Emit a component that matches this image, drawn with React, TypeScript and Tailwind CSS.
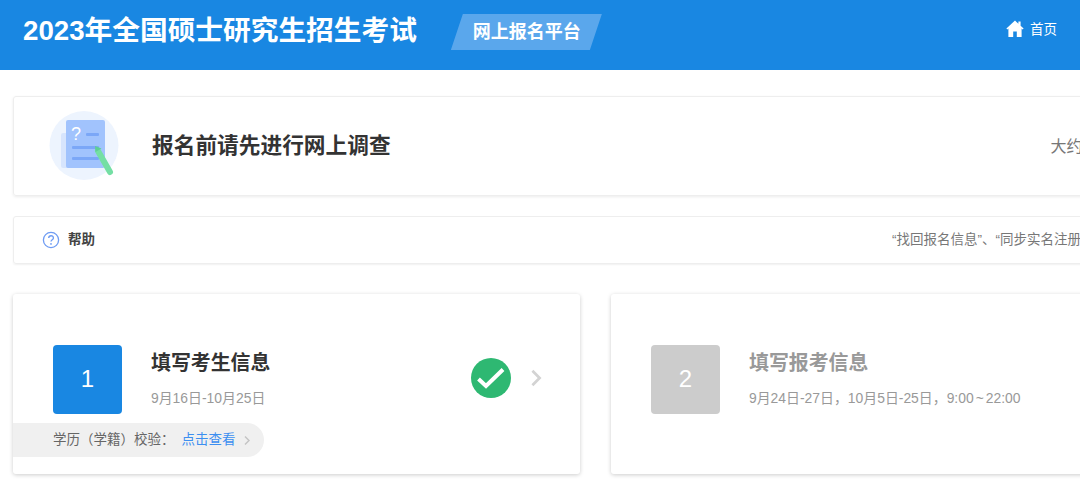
import React from "react";

const font = { fontFamily: '"Liberation Sans", "Noto Sans CJK SC", sans-serif' };

function Chevron({ className }: { className: string }) {
  return (
    <svg viewBox="0 0 12 20" className={className} fill="none" stroke="currentColor" strokeWidth="3">
      <path d="M2 2l8 8-8 8" />
    </svg>
  );
}

function Step({ n, title, date, active }: { n: string; title: string; date: React.ReactNode; active?: boolean }) {
  return (
    <div className="flex items-center gap-[29px]">
      <div className={`flex h-[69px] w-[69px] items-center justify-center rounded-[4px] pb-[1px] text-[24px] text-white ${active ? "bg-[#1987e2]" : "bg-[#cccccc]"}`}>
        {n}
      </div>
      <div className="flex flex-col pb-[4px]">
        <div className={`h-[30px] text-[19.900px] leading-[30px] font-bold ${active ? "text-[#333333]" : "text-[#999999]"}`}>{title}</div>
        <div className="mt-[10px] h-[20px] text-[13.900px] leading-[20px] text-[#999999]">{date}</div>
      </div>
    </div>
  );
}

export default function App() {
  return (
    <div className="h-[479px] w-[1080px] overflow-hidden bg-white" style={font}>
      <header className="flex h-[70px] w-[1080px] bg-[#1987e2] text-white">
        <h1 className="mt-[13px] ml-[23px] h-[36px] text-[27.700px] leading-[36px] font-bold whitespace-nowrap">2023年全国硕士研究生招生考试</h1>
        <div className="mt-[14px] ml-[34px] flex h-[36px] w-[151px] items-center justify-center bg-[#5aa7ec] text-[18px] font-bold [clip-path:polygon(12px_0,100%_0,139px_100%,0_100%)]">
          <span className="pl-[1px]">网上报名平台</span>
        </div>
        <div className="mt-[19px] mr-[23px] ml-auto flex h-[20px] items-center gap-[6px] text-[13.500px]">
          <svg viewBox="0 0 18 18" className="h-[18px] w-[18px]" fill="#fff">
            <path d="M9 .4 .4 8.600l.9 1L2.400 8.600V17h4.800v-5.400h3.600V17h4.800V8.600l1.100 1 .9-1-3-2.800V1.400h-2.200v2.400L9 .4z" />
          </svg>
          <span className="pt-[2px]">首页</span>
        </div>
      </header>

      <main className="flex w-[1400px] flex-col pt-[26px] pl-[13px]">
        <section className="flex h-[100px] w-[1380px] items-center rounded-[3px] border border-[#eeeeee] shadow-[0_1px_3px_rgba(0,0,0,0.08)]">
          <svg viewBox="0 0 90 80" className="mb-[2px] ml-[26px] h-[80px] w-[90px] shrink-0">
            <circle cx="44" cy="40.500" r="34.500" fill="#edf4fe" />
            <rect x="21" y="28" width="10" height="35" rx="2" fill="#d7e5fd" />
            <rect x="26" y="15" width="39" height="48" rx="2" fill="#a1c3fd" />
            <rect x="46" y="28" width="13" height="3" rx="1" fill="#7ba7f7" />
            <rect x="32" y="41" width="27" height="3" rx="1" fill="#7ba7f7" />
            <rect x="32" y="52" width="27" height="3" rx="1" fill="#7ba7f7" />
            <path d="M58 46 70 67" stroke="#74dfa4" strokeWidth="6" strokeLinecap="round" />
            <path d="M55 41 61.500 43.500 55.500 47z" fill="#5fcf95" />
            <text x="31" y="35" fontSize="18" fill="#fff" fontFamily="Liberation Sans">?</text>
          </svg>
          <h2 className="ml-[22px] pt-[1px] text-[21.700px] font-bold whitespace-nowrap text-[#333333]">报名前请先进行网上调查</h2>
          <span className="ml-[660px] pt-[1px] text-[16px] whitespace-nowrap text-[#777777]">大约需要1分钟</span>
        </section>

        <section className="mt-[20px] flex h-[48px] w-[1380px] items-center rounded-[3px] border border-[#eeeeee] shadow-[0_1px_2px_rgba(0,0,0,0.06)]">
          <svg viewBox="0 0 18 18" className="ml-[28px] h-[18px] w-[18px]" fill="none">
            <circle cx="9" cy="9" r="7.600" stroke="#6f9cf3" strokeWidth="1.300" />
            <path d="M6.700 7c.1-3 4.700-3 4.700-.1 0 2-2.400 1.700-2.400 3.700" stroke="#6f9cf3" strokeWidth="1.400" />
            <circle cx="9" cy="12.900" r=".9" fill="#6f9cf3" />
          </svg>
          <span className="ml-[8px] pt-[1px] text-[13.500px] font-bold text-[#444444]">帮助</span>
          <span className="ml-[797px] pt-[1px] text-[13.500px] whitespace-nowrap text-[#777777]">“找回报名信息”、“同步实名注册信息”</span>
        </section>

        <section className="mt-[30px] flex gap-[31px]">
          <div className="relative h-[180px] w-[567px] rounded-[3px] bg-white pt-[51px] pl-[40px] shadow-[0_1px_4px_rgba(0,0,0,0.2)]">
            <div className="flex items-center">
              <Step n="1" title="填写考生信息" date="9月16日-10月25日" active />
              <div className="mr-[38px] mb-[4px] ml-auto flex items-center gap-[19px]">
                <svg viewBox="0 0 40 40" className="h-[40px] w-[40px]">
                  <circle cx="20" cy="20" r="20" fill="#2eb872" />
                  <path d="M7.500 21l7.500 7L32 11.500" fill="none" stroke="#fff" strokeWidth="4" />
                </svg>
                <Chevron className="h-[18px] w-[12px] text-[#d3d3d3]" />
              </div>
            </div>
            <div className="absolute top-[129px] left-0 flex h-[34px] w-[251px] items-center rounded-r-[17px] bg-[#f0f0f0] pt-[1px] pl-[40px] text-[13.500px] text-[#666666]">
              <span>学历（学籍）校验：</span>
              <span className="ml-[7px] text-[#3d8ff0]">点击查看</span>
              <Chevron className="ml-[8px] h-[11px] w-[6px] text-[#c4c4c4]" />
            </div>
          </div>
          <div className="h-[180px] w-[700px] rounded-[3px] bg-white pt-[51px] pl-[40px] shadow-[0_1px_4px_rgba(0,0,0,0.2)]">
            <Step
              n="2"
              title="填写报考信息"
              date={
                <>
                  9月24日-27日，10月5日-25日，9:00<span className="mx-[2px]">~</span>22:00
                </>
              }
            />
          </div>
        </section>
      </main>
    </div>
  );
}
